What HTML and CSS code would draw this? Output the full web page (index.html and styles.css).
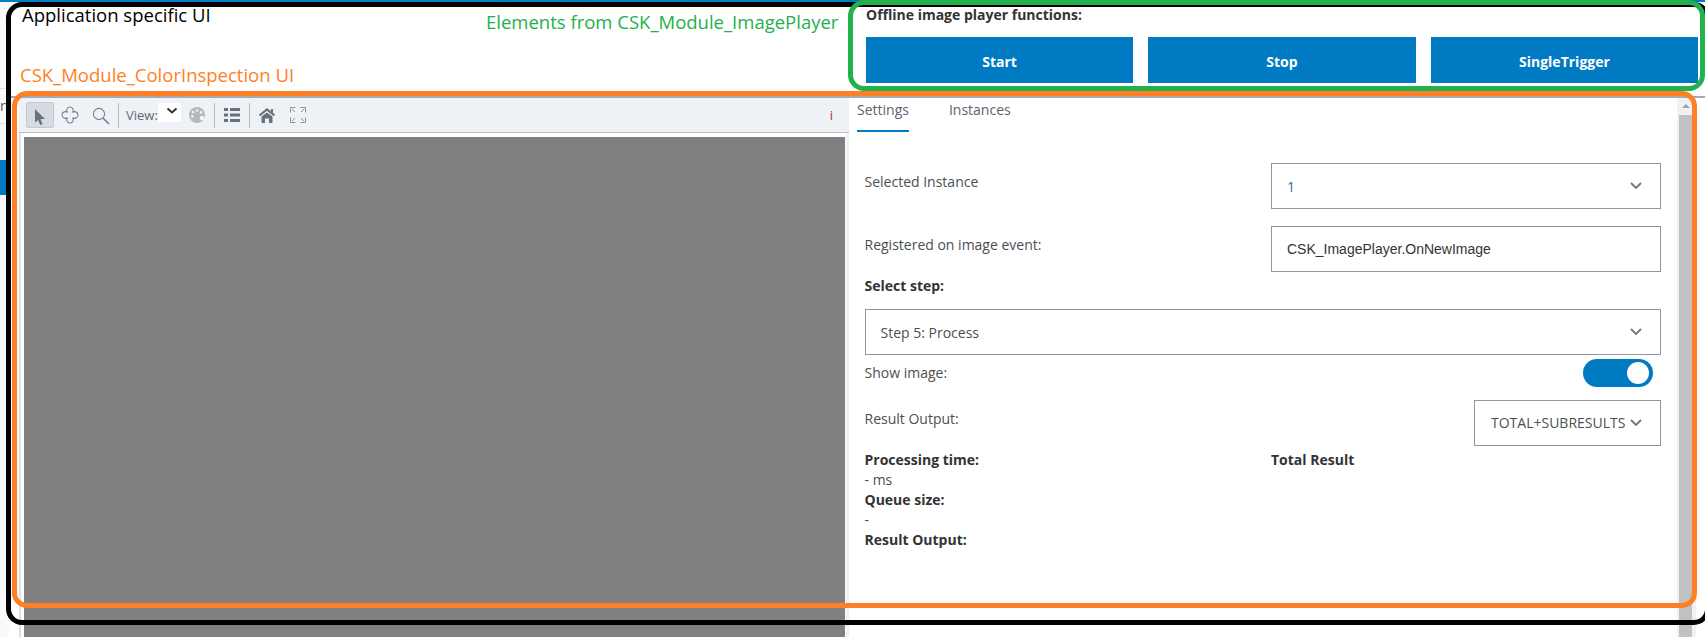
FILE: index.html
```html
<!DOCTYPE html>
<html lang="en">
<head>
  <meta charset="UTF-8" />
  <meta name="viewport" content="width=device-width, initial-scale=1" />
  <title>CSK_Module_ColorInspection UI</title>
  <link rel="stylesheet" href="styles.css">
</head>
<body>
  <div class="topbar"></div>

  <div class="app">
    <div class="side">
      <div class="side-item">n</div>
      <div class="side-active"></div>
    </div>

    <div class="content">
      <header class="player">
        <div class="player-title">Offline image player functions:</div>
        <div class="player-buttons">
          <button class="btn">Start</button>
          <button class="btn">Stop</button>
          <button class="btn">SingleTrigger</button>
        </div>
      </header>

      <main class="workspace">
        <section class="viewer">
          <div class="toolbar">
            <div class="tool-group">
              <div class="tool tool-on">
                <svg width="28" height="26" viewBox="0 0 28 26"><path d="M9 7 L19 17 L14.5 17 L16.5 22 L14.3 23 L12 18 L9 20.5 Z" fill="#66727d"/></svg>
              </div>
              <div class="tool">
                <svg width="28" height="26" viewBox="0 0 28 26"><path d="M11.5 10.5 C10 9 10.5 5 14 5 C17.5 5 18 9 16.5 10.5 C18 9 22 9.5 22 13 C22 16.5 18 17 16.5 15.5 C18 17 17.5 21 14 21 C10.5 21 10 17 11.5 15.5 C10 17 6 16.5 6 13 C6 9.5 10 9 11.5 10.5 Z" fill="none" stroke="#77828c" stroke-width="1.1"/></svg>
              </div>
              <div class="tool">
                <svg width="28" height="26" viewBox="0 0 28 26"><circle cx="13" cy="12" r="5.6" fill="none" stroke="#77828c" stroke-width="1.1"/><path d="M17 16.2 L23 22" stroke="#77828c" stroke-width="1.6"/></svg>
              </div>
            </div>

            <div class="tool-group">
              <span class="view-label">View:</span>
              <div class="view-select">
                <svg width="12" height="8" viewBox="0 0 12 8"><path d="M1.5 1.5 L6 5.5 L10.5 1.5" fill="none" stroke="#333" stroke-width="2"/></svg>
              </div>
              <div class="tool tool-palette">
                <svg width="28" height="26" viewBox="0 0 28 26"><circle cx="14" cy="13" r="8" fill="#b4b9be"/><circle cx="19" cy="16" r="2.3" fill="#eef1f5"/><circle cx="10" cy="10" r="1.3" fill="#eef1f5"/><circle cx="14" cy="8.6" r="1.3" fill="#eef1f5"/><circle cx="18" cy="10.4" r="1.3" fill="#eef1f5"/><circle cx="9.4" cy="14.4" r="1.3" fill="#eef1f5"/></svg>
              </div>
            </div>

            <div class="tool-group">
              <div class="tool tool-narrow">
                <svg width="26" height="26" viewBox="0 0 26 26" fill="#66727d"><rect x="5" y="6" width="4" height="3"/><rect x="11" y="6" width="10" height="3"/><rect x="5" y="11.5" width="4" height="3"/><rect x="11" y="11.5" width="10" height="3"/><rect x="5" y="17" width="4" height="3"/><rect x="11" y="17" width="10" height="3"/></svg>
              </div>
            </div>

            <div class="tool-group tool-group-end">
              <div class="tool">
                <svg width="28" height="26" viewBox="0 0 28 26"><path d="M6.5 13.5 L14 7.5 L21.5 13.5" fill="none" stroke="#66727d" stroke-width="2.2"/><path d="M18 7 h2 v4 h-2 Z" fill="#66727d"/><path d="M8.5 14.5 L14 10.5 L19.5 14.5 V21 H16 V16.5 H12 V21 H8.5 Z" fill="#66727d"/></svg>
              </div>
              <div class="tool">
                <svg width="28" height="26" viewBox="0 0 28 26" fill="none" stroke="#8a939b" stroke-width="1"><path d="M11.5 5.5 H6.5 V10.5 M8 7 L11 10"/><path d="M16.5 5.5 H21.5 V10.5 M20 7 L17 10"/><path d="M11.5 20.5 H6.5 V15.5 M8 19 L11 16"/><path d="M16.5 20.5 H21.5 V15.5 M20 19 L17 16"/></svg>
              </div>
            </div>

            <span class="tool-info">i</span>
          </div>

          <div class="stage">
            <div class="stage-image"></div>
          </div>
        </section>

        <section class="panel">
          <nav class="tabs">
            <a class="tab tab-on">Settings</a>
            <a class="tab">Instances</a>
          </nav>

          <div class="row">
            <label class="row-label">Selected Instance</label>
            <div class="select select-value">
              <span>1</span>
              <svg class="chevron" width="12" height="8" viewBox="0 0 12 8"><path d="M1 1 L6 6 L11 1" fill="none" stroke="#6b7680" stroke-width="1.8"/></svg>
            </div>
          </div>

          <div class="row row-next">
            <label class="row-label">Registered on image event:</label>
            <input class="text-input" type="text" value="CSK_ImagePlayer.OnNewImage" />
          </div>

          <div class="step-title">Select step:</div>
          <div class="select">
            <span>Step 5: Process</span>
            <svg class="chevron" width="12" height="8" viewBox="0 0 12 8"><path d="M1 1 L6 6 L11 1" fill="none" stroke="#6b7680" stroke-width="1.8"/></svg>
          </div>

          <div class="toggle-row">
            <label class="toggle-label">Show image:</label>
            <div class="toggle"><div class="toggle-knob"></div></div>
          </div>

          <div class="output-row">
            <label class="row-label">Result Output:</label>
            <div class="select select-small">
              <span>TOTAL+SUBRESULTS</span>
              <svg class="chevron" width="12" height="8" viewBox="0 0 12 8"><path d="M1 1 L6 6 L11 1" fill="none" stroke="#6b7680" stroke-width="1.8"/></svg>
            </div>
          </div>

          <div class="results">
            <div>
              <div class="res-title">Processing time:</div>
              <div class="res-value">- ms</div>
              <div class="res-title">Queue size:</div>
              <div class="res-value">-</div>
              <div class="res-title">Result Output:</div>
            </div>
            <div>
              <div class="res-title">Total Result</div>
            </div>
          </div>
        </section>

        <div class="scrollbar">
          <div class="scroll-up"></div>
          <div class="scroll-thumb"></div>
        </div>
      </main>
    </div>
  </div>

  <!-- coloured notes drawn over the screenshot -->
  <div class="notes">
    <div class="frame frame-black"></div>
    <div class="frame frame-green"></div>
    <div class="frame frame-orange"></div>
    <span class="note note-app">Application specific UI</span>
    <span class="note note-player">Elements from CSK_Module_ImagePlayer</span>
    <span class="note note-color">CSK_Module_ColorInspection UI</span>
  </div>
</body>
</html>
```

FILE: styles.css
```css
html, body {
  margin: 0;
  height: 100%;
  overflow: hidden;
}

body {
  position: relative;
  background-color: white;
  font-family: "Open Sans", Arial, sans-serif;
  font-size: 14px;
  line-height: 20px;
  color: #4a4f55;
}

.topbar {
  height: 2px;
  background-color: #007ac3;
}

.app {
  display: flex;
  height: 635px;
}

/* left nav, nearly all hidden behind the frames */
.side {
  width: 9px;
  flex: none;
  overflow: hidden;
  background-color: #f8f9fb;
}
.side-item {
  height: 34px;
  margin-top: 86px;
  padding-right: 3px;
  border-top: 1px solid #dfe2e6;
  border-bottom: 1px solid #dfe2e6;
  line-height: 34px;
  text-align: right;
  color: #5a6470;
}
.side-active {
  width: 6px;
  height: 35px;
  margin-top: 36px;
  background-color: #007ac3;
}

.content {
  flex: 1;
  min-width: 0;
  display: flex;
  flex-direction: column;
}

.player {
  height: 94px;
  box-sizing: border-box;
  flex: none;
  margin-left: 857px;
  margin-right: 7px;
  padding-top: 3px;
}
.player-title {
  font-weight: bold;
  color: #333;
}
.player-buttons {
  display: grid;
  grid-template-columns: repeat(3, 1fr);
  column-gap: 15.3px;
  margin-top: 12px;
}

.btn {
  height: 46px;
  background-color: #007ac3;
  color: white;
  border: none;
  padding: 2px 0 0;
  font-family: "Open Sans", Arial, sans-serif;
  font-size: 14px;
  font-weight: bold;
}

.workspace {
  flex: 1;
  min-height: 0;
  display: flex;
  padding: 0 9px 0 10px;
  border-top: 2px solid #a6aaae;
}

/* image viewer */
.viewer {
  width: 830px;
  flex: none;
  display: flex;
  flex-direction: column;
}

.toolbar {
  height: 34px;
  flex: none;
  display: flex;
  align-items: center;
  padding-left: 3px;
  background-color: #eef1f5;
  border-bottom: 1px solid #b8bec4;
}

.tool-group {
  display: flex;
  align-items: center;
  gap: 2px;
  height: 25px;
  padding: 0 4px;
  border-right: 1px solid #b3b9bf;
}
.tool-group-end {
  gap: 3px;
  padding-left: 3px;
  border-right: none;
}

.tool {
  width: 28px;
  height: 26px;
}
.tool-narrow {
  width: 26px;
}
.tool-palette {
  width: 27px;
}
.tool-on {
  box-sizing: border-box;
  background-color: #d5dbe0;
  border-radius: 3px;
  box-shadow: inset 0 0 0 1px #c3c9ce;
}

.view-label {
  width: 33px;
  padding-left: 3px;
  box-sizing: border-box;
  font-size: 13px;
  color: #5f6a75;
}
.view-select {
  width: 23px;
  height: 19px;
  box-sizing: border-box;
  margin-top: -6px;
  padding: 0 0 3px 4px;
  display: flex;
  align-items: center;
  justify-content: center;
  background-color: white;
}

.tool-info {
  margin-left: auto;
  padding-right: 16px;
  font-size: 13px;
  color: #a8343c;
}

.stage {
  flex: 1;
  min-height: 0;
  padding: 4px 4px 0 3px;
  background-color: white;
  border-left: 2px solid #dde1e5;
  display: flex;
  box-shadow: inset -3px 0 0 #eef1f5;
}
.stage-image {
  flex: 1;
  background-color: #808080;
}

/* settings panel */
.panel {
  flex: 1;
  min-width: 0;
  box-sizing: border-box;
  padding: 0 16px 0 15.5px;
}

.tabs {
  display: flex;
  gap: 40px;
  height: 34px;
  margin-left: -7.5px;
  margin-bottom: 31px;
}
.tab {
  height: 32px;
  padding-top: 2px;
  box-sizing: border-box;
  color: #5a6470;
}
.tab-on {
  height: 34px;
  border-bottom: 2px solid #007ac3;
}

.row {
  display: grid;
  grid-template-columns: 1fr 390px;
}
.row-next {
  margin-top: 17px;
}
.row-label {
  padding-top: 9px;
}

.select {
  height: 46px;
  box-sizing: border-box;
  display: flex;
  align-items: center;
  justify-content: space-between;
  padding: 1px 18px 0 15px;
  border: 1px solid #8e979e;
  background-color: white;
}
.select .chevron {
  margin-top: -1px;
}
.select-value {
  color: #1e73b8;
}
.select-small {
  width: 187px;
  padding-top: 0;
  padding-left: 16px;
}

.text-input {
  height: 46px;
  box-sizing: border-box;
  padding: 0 15px;
  border: 1px solid #8e979e;
  border-radius: 0;
  font-family: "Liberation Sans", Arial, sans-serif;
  font-size: 14px;
  color: #333;
}

.step-title {
  margin: 4px 0 13px;
  font-weight: bold;
  color: #333;
}

.toggle-row {
  display: flex;
  justify-content: space-between;
  align-items: center;
  margin-top: 4px;
  padding-right: 8px;
}
.toggle {
  width: 70px;
  height: 28px;
  display: flex;
  align-items: center;
  justify-content: flex-end;
  padding-right: 4px;
  box-sizing: border-box;
  border-radius: 14px;
  background-color: #007ac3;
}
.toggle-knob {
  width: 22px;
  height: 22px;
  border-radius: 50%;
  background-color: white;
}

.output-row {
  display: flex;
  justify-content: space-between;
  margin-top: 13px;
}

.results {
  display: grid;
  grid-template-columns: 1fr 390px;
  margin-top: 4px;
}
.res-title {
  font-weight: bold;
  color: #333;
}

.scrollbar {
  width: 19px;
  flex: none;
  background-color: #f1f1f1;
  padding-left: 2px;
  box-sizing: border-box;
}
.scroll-up {
  width: 0;
  margin: 6px 0 0 3px;
  border-left: 4px solid transparent;
  border-right: 4px solid transparent;
  border-bottom: 4px solid #a3a3a3;
}
.scroll-thumb {
  width: 13px;
  height: 540px;
  margin-top: 7px;
  background-color: #c1c1c1;
}

/* notes layer */
.notes {
  position: absolute;
  left: 0;
  top: 0;
  width: 1705px;
  height: 637px;
  overflow: hidden;
  pointer-events: none;
}

.frame {
  position: absolute;
  box-sizing: border-box;
  border-style: solid;
  border-width: 5px;
}
.frame-black {
  left: 6px;
  top: 2px;
  width: 1704px;
  height: 623px;
  border-color: black;
  border-radius: 16px;
}
.frame-green {
  left: 848px;
  top: 0;
  width: 857px;
  height: 91px;
  border-color: #22b14c;
  border-radius: 16px;
}
.frame-orange {
  left: 12px;
  top: 91px;
  width: 1685px;
  height: 517px;
  border-color: #ff7f27;
  border-radius: 15px;
}

.note {
  position: absolute;
  white-space: nowrap;
  font-size: 18.5px;
  line-height: 24px;
}
.note-app {
  left: 22px;
  top: 3px;
  color: black;
}
.note-player {
  left: 486px;
  top: 10px;
  color: #22b14c;
}
.note-color {
  left: 20px;
  top: 63px;
  color: #ff7f27;
}
```
